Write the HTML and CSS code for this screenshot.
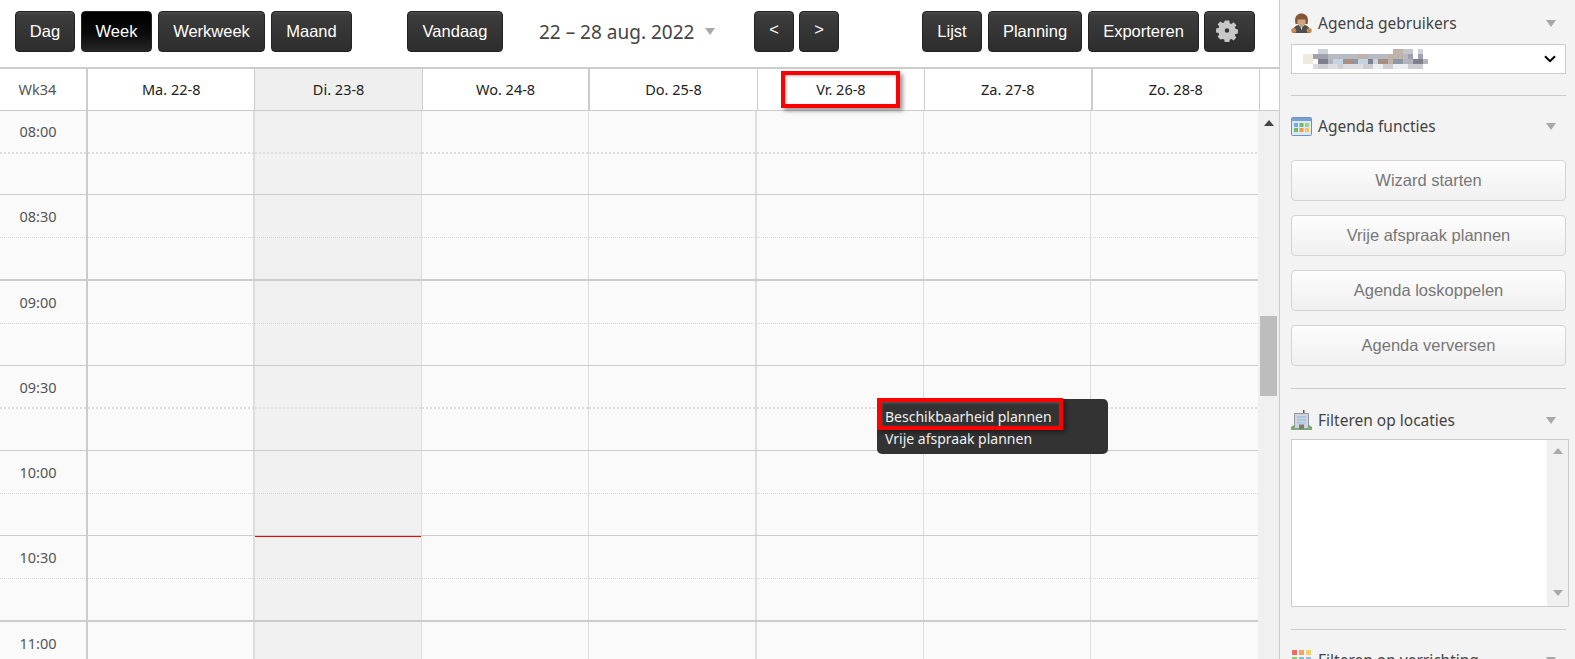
FILE: index.html
```html
<!DOCTYPE html>
<html lang="nl">
<head>
<meta charset="utf-8">
<title>Agenda</title>
<link rel="stylesheet" href="styles.css">
</head>
<body>
<div class="app">
  <main class="main">
    <div class="toolbar">
      <div class="group g-view">
        <button class="btn w-dag">Dag</button>
        <button class="btn active w-week">Week</button>
        <button class="btn w-werk">Werkweek</button>
        <button class="btn w-maand">Maand</button>
      </div>
      <button class="btn w-vandaag">Vandaag</button>
      <div class="range"><span>22 – 28 aug. 2022</span><i class="caret"></i></div>
      <div class="group g-nav">
        <button class="btn w-nav">&lt;</button>
        <button class="btn w-nav">&gt;</button>
      </div>
      <div class="group g-right">
        <button class="btn w-lijst">Lijst</button>
        <button class="btn w-plan">Planning</button>
        <button class="btn w-exp">Exporteren</button>
        <button class="btn w-gear" aria-label="Instellingen">
          <svg class="gear" width="22" height="22" viewBox="0 0 22 22"><path fill="#c8c8c8" fill-rule="evenodd" d="M8.500 0h5l.5 3 1.800.8L18.300 2l3 3.200-1.700 2.300.6 1.700 2.800.6v4.400l-2.800.6-.6 1.700 1.700 2.300-3 3.200-2.500-1.800-1.800.8-.5 3h-5l-.5-3-1.800-.8L3.700 21l-3-3.200 1.700-2.300-.6-1.700L-1 13.200V8.800l2.800-.6.6-1.700L.7 4.200l3-3.200 2.500 1.800L8 2zM11 8.500a2.500 2.500 0 1 0 0 5 2.500 2.500 0 0 0 0-5z" transform="translate(1 .5) scale(.91)"/></svg>
        </button>
      </div>
    </div>

    <div class="head">
      <div class="hc wk">Wk34</div>
      <div class="hc">Ma. 22-8</div>
      <div class="hc today">Di. 23-8</div>
      <div class="hc">Wo. 24-8</div>
      <div class="hc">Do. 25-8</div>
      <div class="hc">Vr. 26-8</div>
      <div class="hc">Za. 27-8</div>
      <div class="hc">Zo. 28-8</div>
      <div class="hc end"></div>
    </div>

    <div class="body">
      <div class="rows">
        <div class="row first coarse"><div class="time">08:00</div><div class="c"></div><div class="c today"></div><div class="c"></div><div class="c"></div><div class="c"></div><div class="c"></div><div class="c"></div></div>
        <div class="row hour fine"><div class="time">08:30</div><div class="c"></div><div class="c today"></div><div class="c"></div><div class="c"></div><div class="c"></div><div class="c"></div><div class="c"></div></div>
        <div class="row fine"><div class="time">09:00</div><div class="c"></div><div class="c today"></div><div class="c"></div><div class="c"></div><div class="c"></div><div class="c"></div><div class="c"></div></div>
        <div class="row coarse"><div class="time">09:30</div><div class="c"></div><div class="c today"></div><div class="c"></div><div class="c"></div><div class="c"></div><div class="c"></div><div class="c"></div></div>
        <div class="row fine"><div class="time">10:00</div><div class="c"></div><div class="c today"></div><div class="c"></div><div class="c"></div><div class="c"></div><div class="c"></div><div class="c"></div></div>
        <div class="row hour fine"><div class="time">10:30</div><div class="c"></div><div class="c today"></div><div class="c"></div><div class="c"></div><div class="c"></div><div class="c"></div><div class="c"></div></div>
        <div class="row fine"><div class="time">11:00</div><div class="c"></div><div class="c today"></div><div class="c"></div><div class="c"></div><div class="c"></div><div class="c"></div><div class="c"></div></div>
      </div>
      <div class="vscroll">
        <i class="arrow-up"></i>
        <div class="thumb"></div>
      </div>
    </div>

    <div class="now"></div>
    <div class="mark mark-day"></div>
    <div class="menu">
      <div class="menu-item">Beschikbaarheid plannen</div>
      <div class="menu-item">Vrije afspraak plannen</div>
    </div>
    <div class="mark mark-menu"></div>
  </main>

  <aside class="panel">
    <section class="sec sec-users">
      <h2 class="sec-title">
        <svg class="ico soft" width="21" height="21" viewBox="0 0 21 21"><path fill="#4e4e4e" d="M1.500 20c0-5 3-8.500 9-8.500s9 3.500 9 8.500z"/><circle cx="2.800" cy="17.500" r="2.500" fill="#c98a50"/><circle cx="18.200" cy="17.500" r="2.500" fill="#c98a50"/><path fill="#85553a" d="M4 7.500C4 3 7 .5 10.500 .5S17 3 17 7.500L16.500 11h-12z"/><path fill="#cfa482" d="M6.500 6.500h8v4l-2 3h-4l-2-3z"/><path fill="#e0e0e0" d="M9.500 13.500h2l-1 4z"/></svg>
        <span>Agenda gebruikers</span><i class="caret"></i>
      </h2>
      <div class="select">
        <svg class="mosaic" width="125" height="20" viewBox="0 0 125 20" shape-rendering="crispEdges" aria-hidden="true"><path fill="#d0d0da" d="M15 0h10v5H15zM115 0h5v5h-5z"/><path fill="#c4c6cc" d="M100 0h10v5h-10z"/><path fill="#f0e9e2" d="M0 5h10v5H0zM0 10h10v5H0z"/><path fill="#a0a0ae" d="M10 5h15v5H10zM115 5h5v5h-5zM105 5h5v5h-5z"/><path fill="#b6bac2" d="M25 5h30v5H25zM65 5h20v5H65zM95 5h10v5H95z"/><path fill="#bfb3aa" d="M55 5h10v5H55zM90 0h10v10H90zM85 5h5v5h-5zM85 10h5v5h-5z"/><path fill="#7e8090" d="M15 10h10v5H15zM65 10h5v5h-5zM110 10h10v5h-10z"/><path fill="#c4d4e2" d="M30 10h10v5H30zM55 10h10v5H55zM70 10h5v5h-5z"/><path fill="#a58f84" d="M40 10h10v5H40zM75 10h10v5H75z"/><path fill="#8d98a6" d="M50 10h5v5h-5zM90 10h10v5H90z"/><path fill="#b3b3bc" d="M25 10h5v5h-5zM100 10h10v5h-10zM120 10h5v5h-5z"/><path fill="#dcdce2" d="M10 15h50v5H10z"/><path fill="#cfcdd2" d="M15 15h10v5H15zM35 15h5v5h-5zM60 15h10v5H60zM80 15h10v5H80zM105 15h15v5h-15z"/><path fill="#eceef0" d="M70 15h10v5H70zM90 15h15v5H90z"/></svg>
        <svg class="chev" width="12" height="8" viewBox="0 0 12 8"><path d="M1 1.200l5 5 5-5" fill="none" stroke="#000" stroke-width="2"/></svg>
      </div>
    </section>

    <section class="sec sec-func">
      <h2 class="sec-title">
        <svg class="ico" width="21" height="19" viewBox="0 0 21 19"><rect x=".5" y=".5" width="20" height="18" rx="1" fill="#dbe8f6" stroke="#6c93c4"/><path fill="#7aa0d0" d="M1 1h19v3H1z"/><path fill="#6fb0e0" d="M3 6h4v4H3z"/><path fill="#76b866" d="M8.500 6h4v4h-4zM3 11h4v4H3z"/><path fill="#a8cf7c" d="M14 6h4v4h-4z"/><path fill="#f09a50" d="M8.500 11h4v4h-4z"/><path fill="#f3c860" d="M14 11h4v4h-4z"/></svg>
        <span>Agenda functies</span><i class="caret"></i>
      </h2>
      <div class="actions">
        <button class="action">Wizard starten</button>
        <button class="action">Vrije afspraak plannen</button>
        <button class="action">Agenda loskoppelen</button>
        <button class="action">Agenda verversen</button>
      </div>
    </section>

    <section class="sec sec-loc">
      <h2 class="sec-title">
        <svg class="ico soft" width="21" height="21" viewBox="0 0 21 21"><path fill="#c03030" d="M12 0h1.500v4H12z"/><path fill="#6fb35a" d="M0 17l3-2h15l3 2v3H0z"/><path fill="#d0d3d8" stroke="#8f97a3" d="M3.500 3.500h14v15h-14z"/><path fill="#a9c6ea" d="M6 6h9v2H6zM6 9h9v2H6zM6 12h9v1.500H6z"/><path fill="#7a7a7a" d="M8 14.500h5V19H8z"/></svg>
        <span>Filteren op locaties</span><i class="caret"></i>
      </h2>
      <div class="listbox">
        <div class="list-track"><i class="arrow-up grey"></i><i class="arrow-down"></i></div>
      </div>
    </section>

    <section class="sec sec-act">
      <h2 class="sec-title">
        <svg class="ico" width="21" height="21" viewBox="0 0 21 21"><path fill="#f26a63" d="M1 0h5v5H1z"/><path fill="#f3a25f" d="M8 0h5v5H8z"/><path fill="#f4cf62" d="M15 0h5v5h-5z"/><path fill="#8ccb74" d="M1 7h5v5H1z"/><path fill="#76c3e6" d="M8 7h5v5H8z"/><path fill="#9fb4e4" d="M15 7h5v5h-5z"/></svg>
        <span>Filteren op verrichting</span><i class="caret"></i>
      </h2>
    </section>
  </aside>
</div>
</body>
</html>
```
FILE: styles.css
```css
* { box-sizing: border-box; }
html, body { margin: 0; height: 659px; overflow: hidden; background: #fff; }
body { font-family: "Noto Sans", "DejaVu Sans", sans-serif; color: #333; }
button { font: inherit; cursor: pointer; }

.app { display: flex; height: 659px; overflow: hidden; }
.main { position: relative; width: 1279px; flex: none; }

/* toolbar */
.toolbar { height: 67px; padding: 11px 0 0 15px; display: flex; align-items: flex-start; }
.group { display: flex; }
.g-view { gap: 6px; }
.g-nav { gap: 5px; }
.g-right { gap: 6px; margin-left: 83px; }
.btn {
  height: 41px; padding: 0 0 1px; border: 1px solid #222; border-radius: 4px;
  background: linear-gradient(#4c4c4c 0, #3c3c3c 8%, #2d2d2d 100%);
  color: #fff; font-family: "Liberation Sans", Arial, sans-serif; font-size: 16.5px;
  text-align: center;
}
.btn.active { background: linear-gradient(#000 0, #0a0a0a 55%, #262626 100%); }
.w-dag { width: 60px; } .w-week { width: 71px; } .w-werk { width: 107px; } .w-maand { width: 81px; }
.w-vandaag { width: 96px; margin-left: 55px; }
.w-nav { width: 40px; padding-bottom: 4px; }
.w-lijst { width: 60px; } .w-plan { width: 94px; } .w-exp { width: 111px; }
.w-gear { width: 51px; margin-left: -1px; padding: 0 5px 2px 0; display: flex; align-items: center; justify-content: center; }
.gear { filter: blur(.5px); }

.range { width: 251px; padding-left: 36px; height: 41px; display: flex; align-items: center; gap: 11px; font-size: 19px; color: #444; white-space: nowrap; }
.caret { display: inline-block; width: 0; height: 0; border-left: 5.5px solid transparent; border-right: 5.5px solid transparent; border-top: 7px solid #a8a8a8; }

/* header row */
.head {
  height: 44px; display: grid; grid-template-columns: 88px repeat(7, 1fr) 19px;
  border-top: 2px solid #ccc; border-bottom: 1px solid #ccc;
}
.hc { display: flex; align-items: center; justify-content: center; font-size: 14.5px; color: #222; border-right: 1px solid #ccc; padding-bottom: 1px; }
.hc.wk { color: #555; border-right-width: 2px; padding-right: 11px; }
.hc:nth-child(4), .hc:nth-child(7) { border-right-width: 2px; }
.hc.today { background: #efefef; }
.hc.end { border-right: 0; }

/* grid body */
.body { display: flex; height: 548px; overflow: hidden; }
.rows { flex: 1; min-width: 0; }
.row { height: 85px; display: grid; grid-template-columns: 88px repeat(7, 1fr); border-bottom: 1px solid #ccc; background: #fafafa; }
.row.first { height: 84px; }
.row.first .time { padding-top: 10px; }
.row.hour { height: 86px; border-bottom: 2px solid #ccc; }
.time, .c { background-repeat: no-repeat; background-size: 100% 1px; }
.time { border-right: 2px solid #ccc; font-size: 14.5px; color: #555; text-align: center; padding: 11px 10px 0 0; }
.c { border-right: 1px solid #ddd; }
.c:nth-child(2), .c:nth-child(5) { border-right-width: 2px; }
.c:last-child { border-right: 0; }
.c.today { background-color: #f1f1f1; }
.coarse .time, .coarse .c { background-image: repeating-linear-gradient(90deg, #ddd 0 2px, transparent 2px 4px); background-size: 100% 2px; background-position: 0 41px; }
.fine .time, .fine .c { background-image: repeating-linear-gradient(90deg, #d6d6d6 0 1px, transparent 1px 2px); background-position: 0 42px; }

.vscroll { width: 21px; flex: none; background: #f0f0f0; padding: 9px 2px 0; }
.arrow-up, .arrow-down { display: block; width: 0; height: 0; border-left: 5px solid transparent; border-right: 5px solid transparent; }
.arrow-up { border-bottom: 6px solid #444; margin: 0 auto; }
.arrow-down { border-top: 6px solid #a8a8a8; margin: 0 auto; }
.arrow-up.grey { border-bottom-color: #a8a8a8; }
.thumb { height: 80px; margin-top: 190px; background: #bdbdbd; }

/* overlays */
.now { position: absolute; left: 255px; top: 536px; width: 166px; height: 1px; background: #f00; }
.mark { position: absolute; border: 4px solid #f00; box-shadow: 3px 3px 4px rgba(0,0,0,.4), inset 1px 1px 3px rgba(0,0,0,.3); }
.mark-day { left: 781px; top: 71px; width: 119px; height: 37px; }
.menu { position: absolute; left: 877px; top: 399px; width: 231px; height: 55px; padding: 7px 8px; border-radius: 5px; background: #333; color: #f0f0f0; font-size: 14px; line-height: 22px; }
.mark-menu { left: 877px; top: 398px; width: 186px; height: 32px; box-shadow: 3px 3px 4px rgba(0,0,0,.35), inset 1px 1px 3px rgba(255,255,255,.2); }

/* side panel */
.panel { flex: 1; min-width: 0; background: #f3f3f3; border-left: 1px solid #ccc; padding: 0 9px 0 11px; }
.sec { border-bottom: 1px solid #ccc; }
.sec-title { margin: 0; height: 24px; display: flex; align-items: center; font-size: 15.5px; font-weight: 400; color: #444; white-space: nowrap; }
.sec-title .ico { flex: none; margin-right: 6px; }
.sec-title .soft { filter: blur(.3px); }
.sec-title .caret { margin-left: auto; margin-right: 10px; }
.sec-users { height: 96px; padding-top: 11px; }
.select { margin-top: 9px; height: 30px; background: #fff; border: 1px solid #ccc; display: flex; align-items: center; justify-content: space-between; padding: 0 9px 0 11px; }
.mosaic { filter: blur(.4px); }
.sec-func { height: 293px; padding-top: 18px; }
.actions { display: flex; flex-direction: column; gap: 14px; margin-top: 22px; }
.action { height: 41px; border: 1px solid #d4d4d4; border-radius: 4px; background: linear-gradient(#fdfdfd, #f0f0f0); color: #777; font-size: 16.5px; font-family: "Liberation Sans", Arial, sans-serif; }
.sec-loc { height: 241px; padding-top: 19px; }
.listbox { margin-top: 7px; margin-right: -3px; height: 168px; background: #fff; border: 1px solid #ccc; display: flex; justify-content: flex-end; }
.list-track { width: 21px; background: #f0f0f0; padding: 8px 0 10px; display: flex; flex-direction: column; justify-content: space-between; }
.sec-act { border-bottom: 0; padding-top: 18px; }
```
